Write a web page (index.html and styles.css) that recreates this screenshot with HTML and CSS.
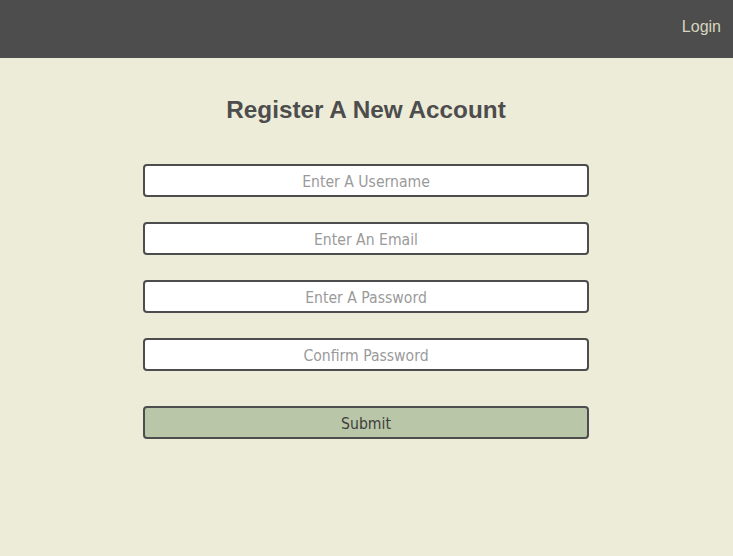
FILE: index.html
```html
<!DOCTYPE html>
<html>
<head>
<meta charset="utf-8">
<link rel="stylesheet" href="styles.css">
</head>
<body>
<header class="topbar">
  <a class="login" href="#">Login</a>
</header>
<main class="content">
  <h1 class="title">Register A New Account</h1>
  <form class="form">
    <input class="field" type="text" placeholder="Enter A Username">
    <input class="field" type="email" placeholder="Enter An Email">
    <input class="field" type="password" placeholder="Enter A Password">
    <input class="field" type="password" placeholder="Confirm Password">
    <button class="submit" type="button">Submit</button>
  </form>
</main>
</body>
</html>
```
FILE: styles.css
```css
html, body {
  margin: 0;
  padding: 0;
  height: 100%;
}
body {
  background: #edecd8;
  font-family: "Liberation Sans", Arial, sans-serif;
}
.topbar {
  height: 58px;
  background: #4d4d4d;
  display: flex;
  align-items: center;
  justify-content: flex-end;
  padding: 0 12px;
}
.login {
  color: #d6d6bf;
  text-decoration: none;
  font-size: 16px;
  margin-top: -4px;
}
.content {
  display: flex;
  flex-direction: column;
  align-items: center;
  padding-right: 1px;
}
.title {
  margin: 38px 0 0 0;
  font-size: 24.3px;
  font-weight: bold;
  color: #4d4d4d;
  line-height: 28px;
}
.form {
  margin-top: 40px;
  width: 446px;
  display: flex;
  flex-direction: column;
  gap: 25px;
}
.field, .submit {
  box-sizing: border-box;
  width: 446px;
  height: 33px;
  border: 2px solid #4d4d4d;
  border-radius: 4px;
  background: #ffffff;
  text-align: center;
  font-family: "DejaVu Sans Condensed", "DejaVu Sans", sans-serif;
  font-size: 15.6px;
  color: #4d4d4d;
  padding: 2px 0 0 0;
  margin: 0;
}
.field::placeholder {
  color: #9a9a9a;
}
.submit {
  margin-top: 10px;
  background: #b9c6a7;
  color: #3e3e3e;
}
```
